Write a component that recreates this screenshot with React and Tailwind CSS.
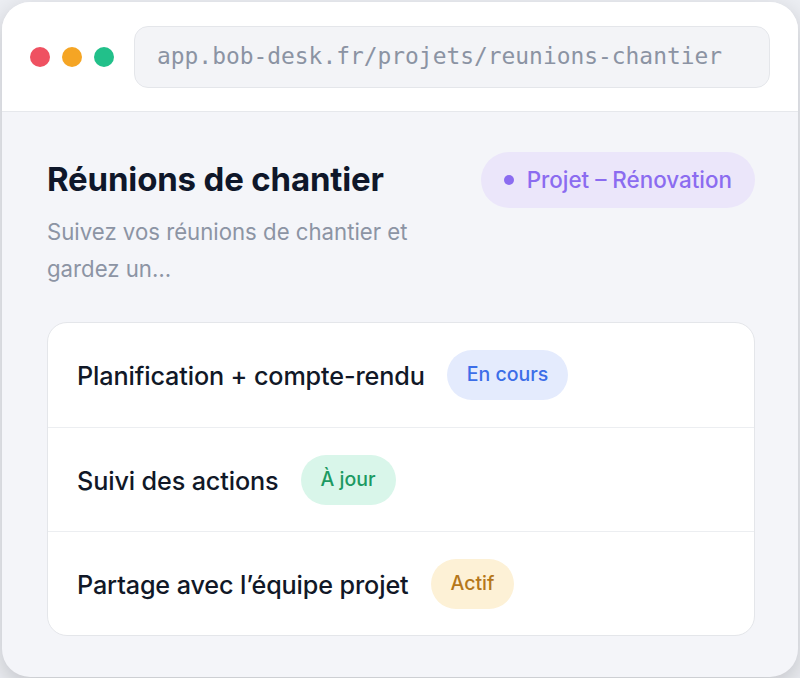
import React from 'react';

const rows = [
  { label: 'Planification + compte-rendu', tag: 'En cours', tone: 'bg-[#e4ebfd] text-[#3c6ee8]' },
  { label: 'Suivi des actions', tag: 'À jour', tone: 'bg-[#d9f6ea] text-[#1c9a62]' },
  { label: 'Partage avec l’équipe projet', tag: 'Actif', tone: 'bg-[#fdf1d6] text-[#b5771a]' },
];

const App = () => {
  return (
    <div className="w-[800px] h-[678px] overflow-hidden bg-[#eceef3] pt-[2px] pl-[2px]" style={{ fontFamily: 'Inter, "Noto Sans", sans-serif' }}>
      <div className="w-[796px] h-[675px] rounded-[28px] bg-[#f4f5f9] overflow-hidden flex flex-col shadow-[0_8px_24px_rgba(0,0,0,0.18)]">
        <header className="h-[110px] shrink-0 bg-white border-b border-[#e6e8ec] flex items-center pl-[28px] pr-[28px] gap-[20px]">
          <div className="flex items-center gap-[12px]">
            <span className="w-[20px] h-[20px] rounded-full bg-[#ef5161]" />
            <span className="w-[20px] h-[20px] rounded-full bg-[#f5a524]" />
            <span className="w-[20px] h-[20px] rounded-full bg-[#22c08a]" />
          </div>
          <div className="flex-1 h-[62px] rounded-[14px] bg-[#f3f4f7] border border-[#e4e6ea] flex items-center pl-[22px] text-[#8b93a3] text-[22.9px]" style={{ fontFamily: '"DejaVu Sans Mono", "Liberation Mono", monospace' }}>
            app.bob-desk.fr/projets/reunions-chantier
          </div>
        </header>

        <main className="flex-1 pl-[45px] pr-[43px] pt-[40px]">
          <div className="flex justify-between items-start">
            <div className="max-w-[380px]">
              <h1 className="text-[33px] font-bold text-[#0f172a] tracking-[-0.005em] leading-[40px] mt-[7px]">Réunions de chantier</h1>
              <p className="text-[22.2px] text-[#8c94a4] leading-[37px] mt-[14px]">
                Suivez vos réunions de chantier et gardez un…
              </p>
            </div>
            <div className="h-[56px] rounded-full bg-[#ebe6fa] flex items-center pl-[23px] pr-[23px] gap-[13px] text-[#8b6cf0] text-[22.4px] font-medium">
              <span className="w-[10px] h-[10px] rounded-full bg-[#8b6cf0]" />
              Projet – Rénovation
            </div>
          </div>

          <div className="mt-[35px] bg-white border border-[#e4e6ea] rounded-[20px] flex flex-col">
            {rows.map((r, i) => (
              <div key={r.tag} className={`h-[104px] flex items-center pl-[29px] gap-[22px] ${i > 0 ? 'border-t border-[#eceef1]' : ''}`}>
                <span className="text-[25.2px] font-medium text-[#111827] tracking-[-0.005em] mt-[4px]">{r.label}</span>
                <span className={`h-[50px] rounded-full px-[20px] flex items-center text-[19.5px] font-medium ${r.tone}`}>{r.tag}</span>
              </div>
            ))}
          </div>
        </main>
      </div>
    </div>
  );
};

export default App;
